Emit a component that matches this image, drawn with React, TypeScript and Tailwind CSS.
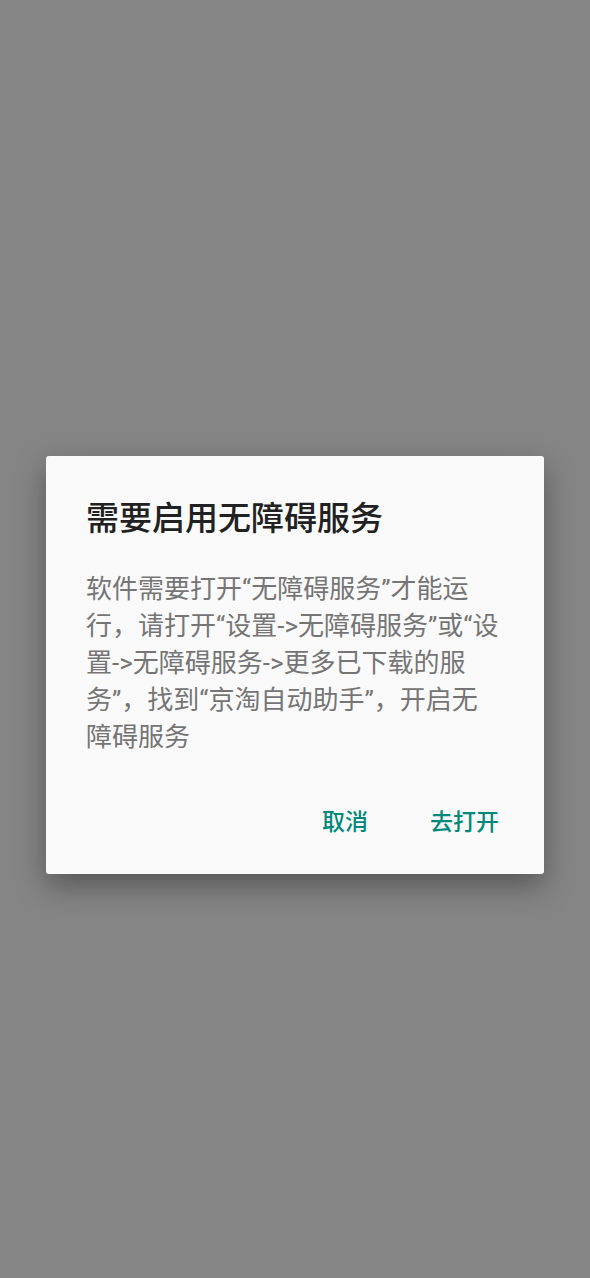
const bodyLines = [
  "软件需要打开“无障碍服务”才能运",
  "行，请打开“设置->无障碍服务”或“设",
  "置->无障碍服务->更多已下载的服",
  "务”，找到“京淘自动助手”，开启无",
  "障碍服务",
];

export default function App() {
  return (
    <div
      className="w-[590px] h-[1278px] bg-[#858585] pt-[456px] pl-[46px]"
      style={{ fontFamily: '"Roboto", "Noto Sans CJK SC", sans-serif' }}
    >
      <div className="w-[498px] h-[418px] bg-[#fafafa] rounded-[3px] shadow-[0_12px_30px_rgba(0,0,0,0.35)] flex flex-col">
        <div className="pt-[43px] px-[40px] text-[33px] leading-[40px] text-[#212121] font-medium">
          需要启用无障碍服务
        </div>
        <div className="mt-[32px] px-[40px] text-[26px] leading-[37px] text-[#757575]">
          {bodyLines.map((line) => (
            <div key={line} className="whitespace-nowrap">
              {line}
            </div>
          ))}
        </div>
        <div className="mt-auto mb-[28px] flex justify-end items-center pr-[45px] gap-[62px]">
          <span className="h-[46px] leading-[46px] text-[23px] font-medium text-[#00897b]">取消</span>
          <span className="h-[46px] leading-[46px] text-[23px] font-medium text-[#00897b]">去打开</span>
        </div>
      </div>
    </div>
  );
}
